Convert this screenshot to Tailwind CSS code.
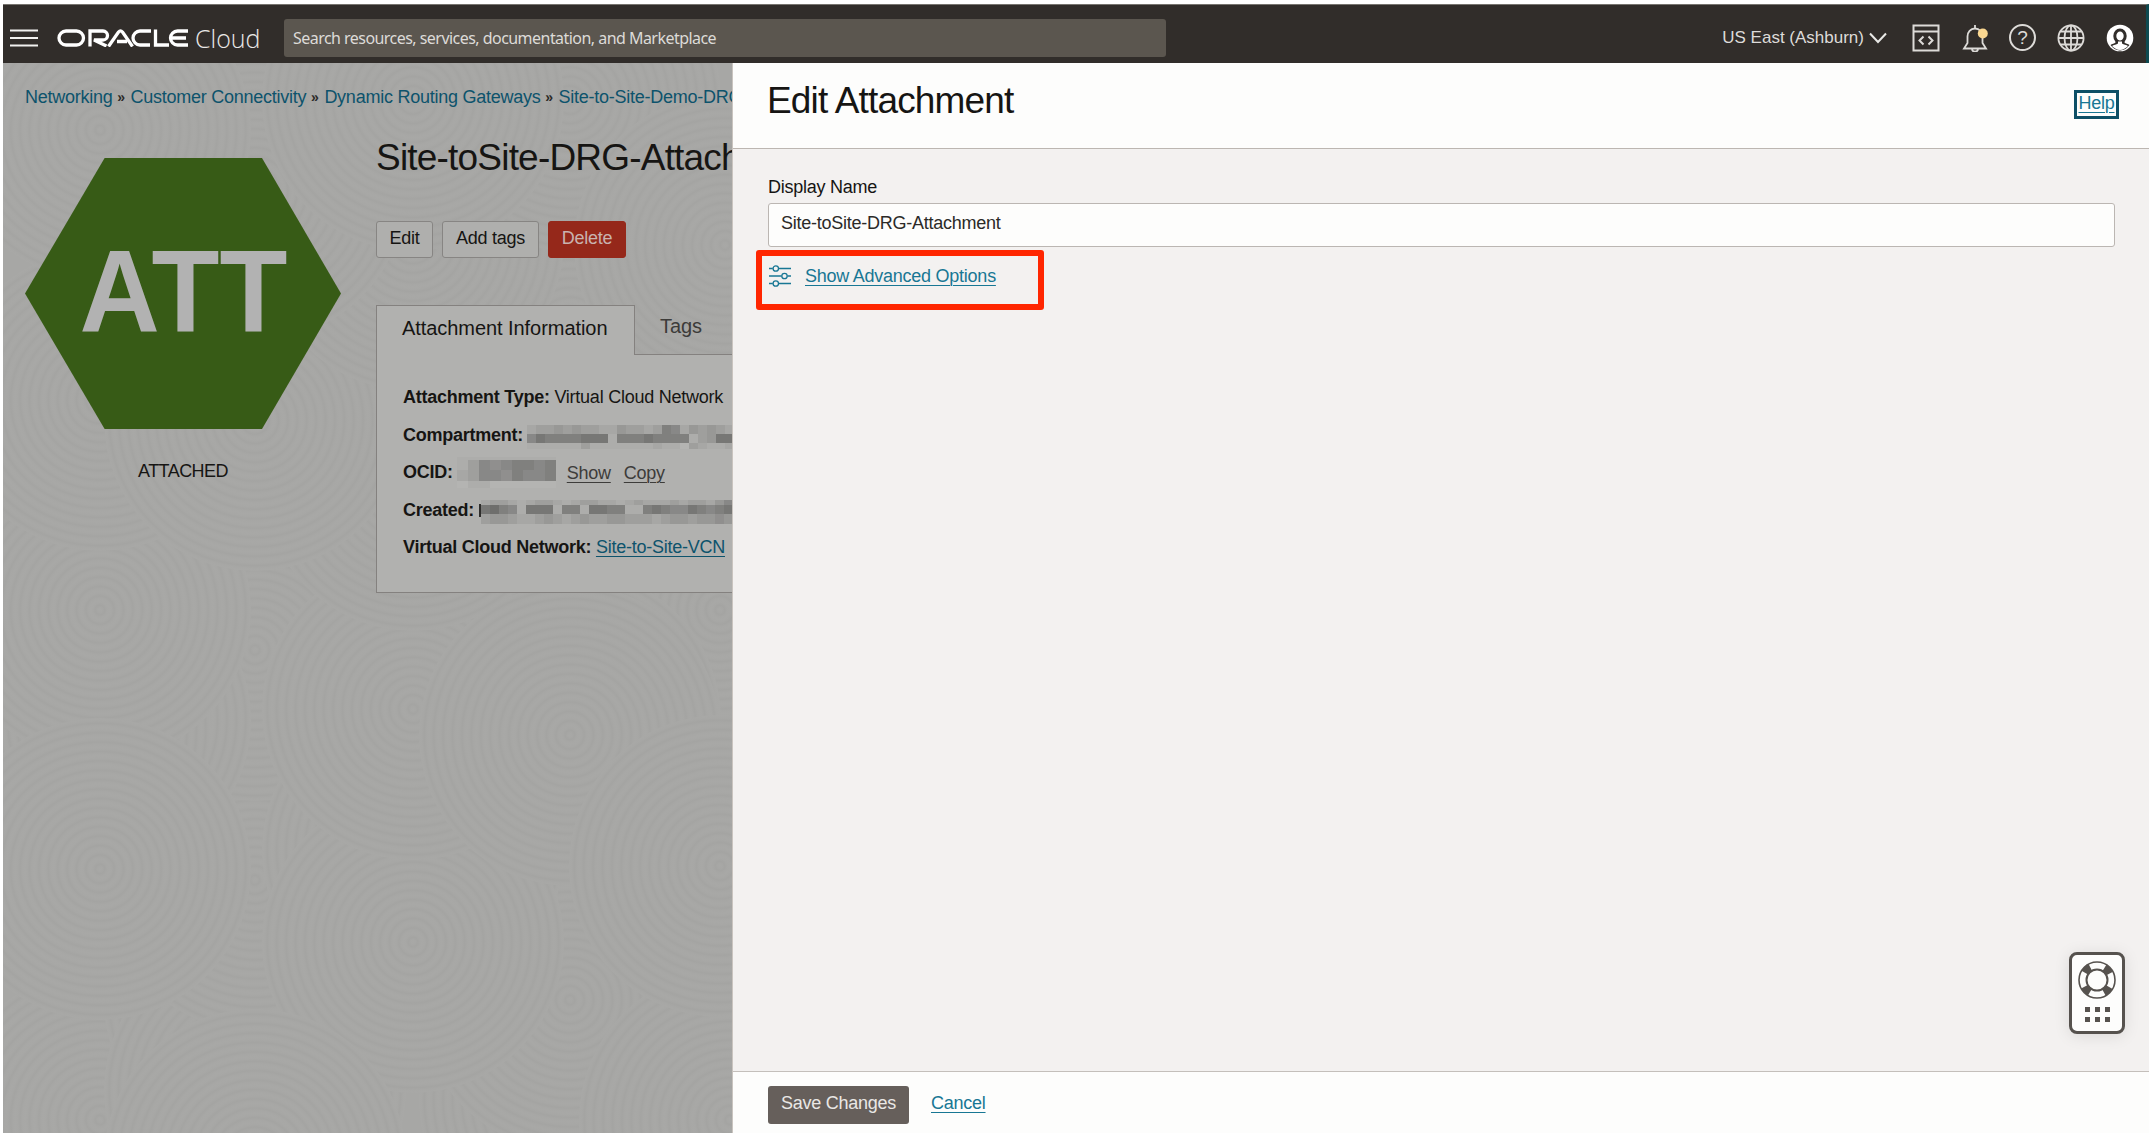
<!DOCTYPE html>
<html lang="en">
<head>
<meta charset="utf-8">
<title>Edit Attachment</title>
<script src="https://cdn.jsdelivr.net/npm/@tailwindcss/browser@4"></script>
</head>
<body class="bg-white overflow-hidden font-['Liberation_Sans',sans-serif] text-[18px] tracking-[-0.25px] text-[#161513]">
<div class="w-[2149px] h-[1133px] pl-[3px] pt-[4px] flex flex-col overflow-hidden">
  <header class="h-[59px] shrink-0 bg-[#312d2a] border-t border-[#77746f] flex items-center text-[#e9e8e6] border-r-[3px] border-r-[#0e4a50] pb-[2px] pt-[9px]">
    <svg class="ml-[7px] w-[28px] h-[18px] shrink-0" viewBox="0 0 28 18" stroke="#f2f1ef" stroke-width="2.2"><path d="M0 1.5H28M0 9H28M0 16.5H28"/></svg>
    <svg class="ml-[19px] w-[131px] h-[18px] shrink-0" viewBox="0 0 131 18" fill="none" stroke="#fff" stroke-width="3.3"><path d="M9 2H19.5a7 7 0 0 1 0 14H9A7 7 0 0 1 9 2Z"/><path d="M33 17.500V2H46a4.500 4.500 0 0 1 0 9H37L49.500 17"/><path d="M51.500 17.500L61.500 3Q63.500 .8 65.500 3L75.500 17.500M60 12.500H70"/><path d="M94 2H83a7 7 0 0 0 0 14H93"/><path d="M98.500 .4V16H112"/><path d="M131 2H120.500a7 7 0 0 0 0 14H131M115 9H129"/></svg>
    <span class="ml-[7px] w-[66px] text-[25px] leading-[30px] tracking-[0px] font-['Open_Sans',sans-serif] font-light">Cloud</span>
    <div class="ml-[23px] w-[882px] h-[38px] rounded-[3px] bg-[#5b564f] flex items-center pl-[9px] text-[16px] tracking-[-0.540px] text-[#dddbd8] font-['Noto_Sans',sans-serif]">Search resources, services, documentation, and Marketplace</div>
    <div class="ml-auto flex items-center mr-[12px]">
      <span class="text-[17px] tracking-normal leading-[22px] text-[#dddbd9] pt-[1px]">US East (Ashburn)</span>
      <svg class="ml-[5px] w-[18px] h-[12px]" viewBox="0 0 18 12" fill="none" stroke="#e9e8e6" stroke-width="2"><path d="M1 1.500L9 10L17 1.500"/></svg>
      <svg class="ml-[25px] w-[28px] h-[28px]" viewBox="0 0 28 28" fill="none" stroke="#dddbd8" stroke-width="2"><path d="M1.500 1.500H26.500V26.500H1.500ZM1.500 7.500H26.500M11.500 12.500L7.500 16.500L11.500 20.500M16.500 12.500L20.500 16.500L16.500 20.500"/></svg>
      <svg class="ml-[22px] w-[28px] h-[28px]" viewBox="0 0 28 28" fill="none" stroke="#dddbd8" stroke-width="1.800"><path d="M2 24.500H24L20.500 19V12.500C20.500 8 17.500 4.500 13 4.500S5.500 8 5.500 12.500V19ZM13 4.500V1M10 24.800a3 2.800 0 0 0 6 0"/><circle cx="20.800" cy="9.500" r="5" fill="#fbd891" stroke="none"/></svg>
      <div class="ml-[19px] w-[27px] h-[27px] rounded-full border-2 border-[#dddbd8] text-[19px] tracking-normal leading-[23px] text-center text-[#dddbd8]">?</div>
      <svg class="ml-[21px] w-[28px] h-[28px]" viewBox="0 0 28 28" fill="none" stroke="#dddbd8" stroke-width="1.800"><circle cx="14" cy="14" r="12.600"/><ellipse cx="14" cy="14" rx="6.500" ry="12.600"/><path d="M14 1V27M1 14H27M3.500 7.500H24.500M3.500 20.500H24.500"/></svg>
      <svg class="ml-[21px] w-[28px] h-[28px]" viewBox="0 0 28 28"><circle cx="14" cy="14" r="13.300" fill="#fff"/><ellipse cx="14" cy="12" rx="5.200" ry="6" fill="none" stroke="#312d2a" stroke-width="3"/><path d="M9.500 16.500h3l1.500 1.500 1.500-1.500h3v2c1 1 3.500 1.600 5 2.500C21 24 18 26.500 14 26.500S7 24 4.500 21c1.500-.9 4-1.500 5-2.500Z" fill="#312d2a"/><path d="M12 17.500h4v2c1.500 1 4.500 1.500 6 2.500-2 2.300-5 4-8 4s-6-1.700-8-4c1.500-1 4.500-1.500 6-2.500Z" fill="#fff"/></svg>
    </div>
  </header>

  <div class="flex flex-1 min-h-0">
    <main class="relative w-[729px] shrink-0 overflow-hidden bg-[#a7a7a5]">
      <!-- concentric-ring wallpaper -->
      <svg class="absolute inset-0 w-[730px] h-[1070px]" viewBox="3 63 730 1070">
        <defs>
          <radialGradient id="ring" gradientUnits="userSpaceOnUse" cx="0" cy="0" r="4.700" spreadMethod="reflect"><stop offset="0" stop-color="#a8a8a6"/><stop offset=".5" stop-color="#a7a7a5"/><stop offset="1" stop-color="#a4a4a2"/></radialGradient>
          <circle id="disc" r="151" fill="url(#ring)"/>
        </defs>
        <g id="wall"></g>
      </svg>
      <div class="relative w-[1400px]">
        <nav class="flex pl-[22px] pt-[22px] leading-[24px] text-[#0d536c] whitespace-nowrap">
          <a>Networking</a><b class="ml-[4px] mr-[5px] text-[14px] w-[9px] text-center text-[#2b2a28]">»</b><a>Customer Connectivity</a><b class="ml-[4px] mr-[5px] text-[14px] w-[9px] text-center text-[#2b2a28]">»</b><a>Dynamic Routing Gateways</a><b class="ml-[4px] mr-[5px] text-[14px] w-[9px] text-center text-[#2b2a28]">»</b><a>Site-to-Site-Demo-DRG</a>
        </nav>
        <div class="flex">
          <aside class="w-[373px] pl-[22px] pt-[49px]">
            <div class="w-[316px] h-[271px] bg-[#375b16] [clip-path:polygon(0_50%,25.2%_0,75%_0,100%_50%,75%_100%,25.2%_100%)] flex items-center justify-center">
              <span class="text-[117px] leading-[110px] tracking-normal scale-x-[0.950] font-bold text-[#b2b2b2] pb-[3px]">ATT</span>
            </div>
            <p class="w-[316px] text-center mt-[30px] leading-[24px] tracking-[-0.550px]">ATTACHED</p>
          </aside>
          <section class="flex-1">
            <h1 class="mt-[27px] text-[37px] tracking-[-0.800px] leading-[44px] whitespace-nowrap">Site-toSite-DRG-Attachment</h1>
            <div class="mt-[41px] flex gap-[9px] leading-[33px]">
              <span class="w-[57px] h-[37px] rounded-[3px] border border-[#878583] bg-[#afafad] text-center">Edit</span>
              <span class="w-[97px] h-[37px] rounded-[3px] border border-[#878583] bg-[#afafad] text-center">Add tags</span>
              <span class="w-[78px] h-[37px] rounded-[3px] border border-[#95281a] bg-[#95281a] text-center text-[#c9b3af]">Delete</span>
            </div>
            <div class="mt-[47px] flex text-[20px] tracking-[-0.060px] leading-[24px]">
              <div class="w-[259px] h-[50px] border border-b-0 border-[#84817f] bg-[#b1b1af] pl-[25px] pt-[10px]">Attachment Information</div>
              <div class="flex-1 border-b border-[#84817f] pl-[25px] pt-[9px] text-[#3c3b39]">Tags</div>
            </div>
            <div class="h-[238px] border-l border-b border-[#84817f] bg-[#b1b1af] pl-[26px] pt-[24px] leading-[37.500px] whitespace-nowrap">
              <div class="h-[37.500px]"><b>Attachment Type:</b> Virtual Cloud Network</div>
              <div class="h-[37.500px] flex items-center"><b class="mr-[4px]">Compartment:</b><div id="m1" class="w-[212px] h-[24px] mt-[3px]"></div></div>
              <div class="h-[37.500px] flex items-center"><b class="mr-[4px]">OCID:</b><div id="m2" class="w-[98px] h-[32px]"></div><a class="ml-[12px] leading-[20px] underline underline-offset-[3px] decoration-1 text-[#3d3c3a]">Show</a><a class="ml-[13px] leading-[20px] underline underline-offset-[3px] decoration-1 text-[#3d3c3a]">Copy</a></div>
              <div class="h-[37.500px] flex items-center"><b class="mr-[5px]">Created:</b><i class="w-[2px] h-[13px] bg-[#2e2d2b]"></i><div id="m3" class="w-[249px] h-[24px] mt-[4px]"></div></div>
              <div class="h-[37.500px]"><b>Virtual Cloud Network:</b> <a class="underline underline-offset-[3px] decoration-1 text-[#0d536c]">Site-to-Site-VCN</a></div>
            </div>
          </section>
        </div>
      </div>
    </main>

    <section class="relative flex-1 flex flex-col bg-[#f3f1f0] border-l border-[#c9c4bf]">
      <div class="h-[86px] shrink-0 bg-[#fdfdfc] border-b border-[#bcb6b1] flex justify-between pl-[34px] pr-[30px]">
        <h2 class="text-[37px] tracking-[-0.850px] leading-[44px] pt-[16px]">Edit Attachment</h2>
        <a class="mt-[27px] w-[45px] h-[29px] border-[3px] border-[#0d4f66] text-center leading-[21px] text-[#187794] underline underline-offset-[3px] decoration-1">Help</a>
      </div>
      <div class="flex-1 pl-[35px] pr-[34px] pt-[26px]">
        <label class="block leading-[24px]">Display Name</label>
        <div class="mt-[4px] h-[44px] rounded-[3px] border border-[#bbb6b2] bg-[#fdfdfc] pl-[12px] leading-[39px] text-[#2b2a28]">Site-toSite-DRG-Attachment</div>
        <div class="ml-[-12px] mt-[3px] w-[288px] h-[60px] rounded-[3px] border-[6px] border-[#ff2600] flex pl-[7px] pt-[9px]">
          <svg class="w-[22px] h-[22px]" viewBox="0 0 22 22" fill="none" stroke="#187794" stroke-width="1.300"><path d="M0 3.500H3.800M9.800 3.500H22M0 11H12.500M18.500 11H22M0 18.500H3.800M9.800 18.500H22"/><circle cx="6.800" cy="3.500" r="2.700"/><circle cx="15.500" cy="11" r="2.700"/><circle cx="6.800" cy="18.500" r="2.700"/></svg>
          <a class="ml-[14px] leading-[22px] whitespace-nowrap text-[#187794] underline underline-offset-[3px] decoration-1">Show Advanced Options</a>
        </div>
      </div>
      <div class="h-[62px] shrink-0 bg-[#fdfdfc] border-t border-[#c4bfbb] flex pl-[35px] pt-[14px]">
        <div class="w-[141px] h-[38px] rounded-[3px] bg-[#665f5b] text-center leading-[35px] text-[#e9e7e5]">Save Changes</div>
        <a class="ml-[22px] leading-[35px] text-[#187794] underline underline-offset-[3px] decoration-1">Cancel</a>
      </div>
      <!-- floating support widget -->
      <div class="absolute left-[1336px] top-[889px] w-[56px] h-[82px] rounded-[8px] border-[3px] border-[#56524e] bg-[#fdfdfc] shadow-[0_2px_16px_rgba(0,0,0,0.1)] flex flex-col items-center pt-[6px]">
        <svg class="w-[38px] h-[38px]" viewBox="0 0 38 38" fill="none" stroke="#56524e"><circle cx="19" cy="19" r="14" stroke-width="8" stroke-dasharray="7.500 14.490" stroke-dashoffset="-7.250"/><circle cx="19" cy="19" r="18" stroke-width="1.600"/><circle cx="19" cy="19" r="10.500" stroke-width="2"/></svg>
        <div class="mt-[8px] grid grid-cols-3 gap-[5px]"><i class="size-[5px] bg-[#56524e]"></i><i class="size-[5px] bg-[#56524e]"></i><i class="size-[5px] bg-[#56524e]"></i><i class="size-[5px] bg-[#56524e]"></i><i class="size-[5px] bg-[#56524e]"></i><i class="size-[5px] bg-[#56524e]"></i></div>
      </div>
    </section>
  </div>
</div>
<script>
// wallpaper discs, painted back to front
const discs=[[100,1120],[255,1190],[570,1100],[730,1170],[255,1000],[570,1000],[255,1090],[730,1120],[255,880],[570,560],[255,650],[100,720],[60,730],[100,610],[720,610],[413,850],[413,942],[570,720],[413,709],[570,735],[100,869],[720,866],[255,1160],[100,400],[413,480],[255,420],[570,330],[720,380],[413,240],[255,190],[100,130],[570,100],[725,245],[413,100]];
document.getElementById('wall').innerHTML=discs.map(([x,y])=>`<use href="#disc" x="${x}" y="${y}"/>`).join('');
// redaction mosaics: column width, row heights, one shade digit per cell (0 lightest, 9 darkest)
function mosaic(id,w,hs,rows){
  const shade=['#b4b4b2','#adadab','#a7a7a5','#9f9f9d','#989896','#908f8e','#888887','#80807e','#777775','#6e6e6c'];
  let y=0,s='';
  rows.forEach((r,i)=>{[...r].forEach((c,j)=>s+=`<rect x="${j*w}" y="${y}" width="${w}" height="${hs[i]}" fill="${shade[c]}"/>`);y+=hs[i]});
  document.getElementById(id).innerHTML=`<svg width="${rows[0].length*w}" height="${y}" shape-rendering="crispEdges">${s}</svg>`;
}
mosaic('m1',9,[9,9,6],['23343433224332376243432','68777788817778777713488','11111131111111211032112']);
mosaic('m2',11,[3,10,11,7],['111111111','136567767','236657667','011000000']);
mosaic('m3',9,[5,9,10],['2332123321233221232223233246','8976188817718877117876687678','3443223432343344333234434454']);
</script>
</body>
</html>
